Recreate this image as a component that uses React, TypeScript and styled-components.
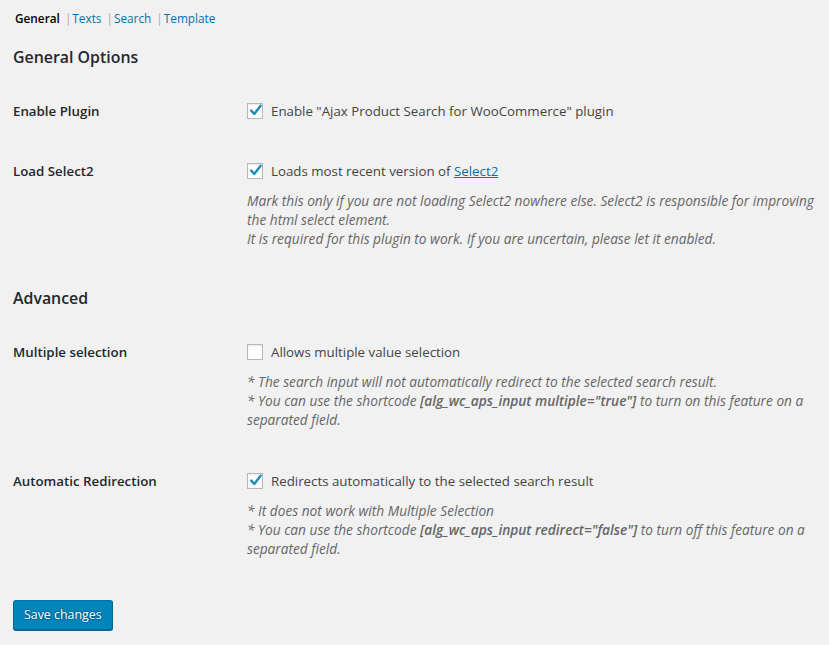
import React from "react";
import styled, { createGlobalStyle } from "styled-components";

const GlobalStyle = createGlobalStyle`
  html, body {
    margin: 0;
    padding: 0;
    background: #f1f1f1;
  }
  body {
    font-family: "Open Sans", "Noto Sans", sans-serif;
    font-size: 13.3px;
    color: #444;
  }
`;

const Wrap = styled.div`
  padding: 9px 0 20px 13px;
`;

const Tabs = styled.ul`
  display: flex;
  list-style: none;
  margin: 0;
  padding: 0 0 0 2px;
  font-size: 11.8px;
  line-height: 19px;
`;

const Tab = styled.li<{ $current?: boolean }>`
  color: #aaa;
  a {
    color: ${(p) => (p.$current ? "#000" : "#0073aa")};
    font-weight: ${(p) => (p.$current ? 600 : 400)};
    text-decoration: none;
  }
`;

const Sep = styled.span`
  color: #aaa;
  padding: 0 1px 0 5px;
`;

const Heading = styled.h2<{ $top: number }>`
  margin: ${(p) => p.$top}px 0 0;
  font-size: 15.9px;
  line-height: 24px;
  font-weight: 600;
  color: #23282d;
`;

const Row = styled.div<{ $top: number }>`
  display: grid;
  grid-template-columns: 234px 1fr;
  padding: 20px 0;
  margin-top: ${(p) => p.$top}px;
`;

const Label = styled.div`
  font-weight: 600;
  color: #23282d;
  line-height: 20px;
`;

const Field = styled.div`
  padding-right: 8px;
`;

const CheckLine = styled.label`
  display: flex;
  align-items: center;
  line-height: 20px;
  cursor: pointer;
`;

const Box = styled.span`
  flex: none;
  width: 16px;
  height: 16px;
  box-sizing: border-box;
  border: 1px solid #b4b9be;
  background: #fff;
  box-shadow: inset 0 1px 2px rgba(0, 0, 0, 0.1);
  margin-right: 8px;
  position: relative;
  svg {
    position: absolute;
    left: -1px;
    top: -2px;
  }
`;

const Link = styled.a`
  color: #0073aa;
  text-decoration: underline;
`;

const Description = styled.p`
  margin: 10px 0 0;
  font-size: 13.7px;
  font-style: italic;
  color: #666;
  line-height: 19px;
  b {
    font-weight: 600;
  }
`;

const Button = styled.button`
  margin-top: 22px;
  height: 30px;
  padding: 0 10px 1px;
  font-family: inherit;
  font-size: 12.4px;
  color: #fff;
  background: #0085ba;
  border: 1px solid #0073aa;
  border-color: #0073aa #006799 #006799;
  border-radius: 3px;
  box-shadow: 0 1px 0 #006799;
  text-shadow: 0 -1px 1px #006799, 1px 0 1px #006799, 0 1px 1px #006799,
    -1px 0 1px #006799;
  cursor: pointer;
`;

const Checkbox: React.FC<{ checked?: boolean }> = ({ checked }) => (
  <Box>
    {checked && (
      <svg width="18" height="18" viewBox="0 0 18 18">
        <path d="M4.2 8.6 L7.3 11.9 L13.6 3.8" fill="none" stroke="#1e8cbe" strokeWidth="2.4" strokeLinecap="round" strokeLinejoin="round" />
      </svg>
    )}
  </Box>
);

export default function App() {
  return (
    <>
      <GlobalStyle />
      <Wrap>
        <Tabs>
          <Tab $current>
            <a href="#">General</a>
          </Tab>
          <Tab>
            <Sep>|</Sep>
            <a href="#">Texts</a>
          </Tab>
          <Tab>
            <Sep>|</Sep>
            <a href="#">Search</a>
          </Tab>
          <Tab>
            <Sep>|</Sep>
            <a href="#">Template</a>
          </Tab>
        </Tabs>

        <Heading $top={17}>General Options</Heading>

        <Row $top={12}>
          <Label>Enable Plugin</Label>
          <Field>
            <CheckLine>
              <Checkbox checked />
              Enable "Ajax Product Search for WooCommerce" plugin
            </CheckLine>
          </Field>
        </Row>

        <Row $top={0}>
          <Label>Load Select2</Label>
          <Field>
            <CheckLine>
              <Checkbox checked />
              <span>
                Loads most recent version of <Link href="#">Select2</Link>
              </span>
            </CheckLine>
            <Description>
              Mark this only if you are not loading Select2 nowhere else. Select2 is responsible for improving
              the html select element.
              <br />
              It is required for this plugin to work. If you are uncertain, please let it enabled.
            </Description>
          </Field>
        </Row>

        <Heading $top={18}>Advanced</Heading>

        <Row $top={12}>
          <Label>Multiple selection</Label>
          <Field>
            <CheckLine>
              <Checkbox />
              Allows multiple value selection
            </CheckLine>
            <Description>
              * The search input will not automatically redirect to the selected search result.
              <br />* You can use the shortcode <b>[alg_wc_aps_input multiple="true"]</b> to turn on this feature on a
              separated field.
            </Description>
          </Field>
        </Row>

        <Row $top={2}>
          <Label>Automatic Redirection</Label>
          <Field>
            <CheckLine>
              <Checkbox checked />
              Redirects automatically to the selected search result
            </CheckLine>
            <Description>
              * It does not work with Multiple Selection
              <br />* You can use the shortcode <b>[alg_wc_aps_input redirect="false"]</b> to turn off this feature on a
              separated field.
            </Description>
          </Field>
        </Row>

        <Button>Save changes</Button>
      </Wrap>
    </>
  );
}
